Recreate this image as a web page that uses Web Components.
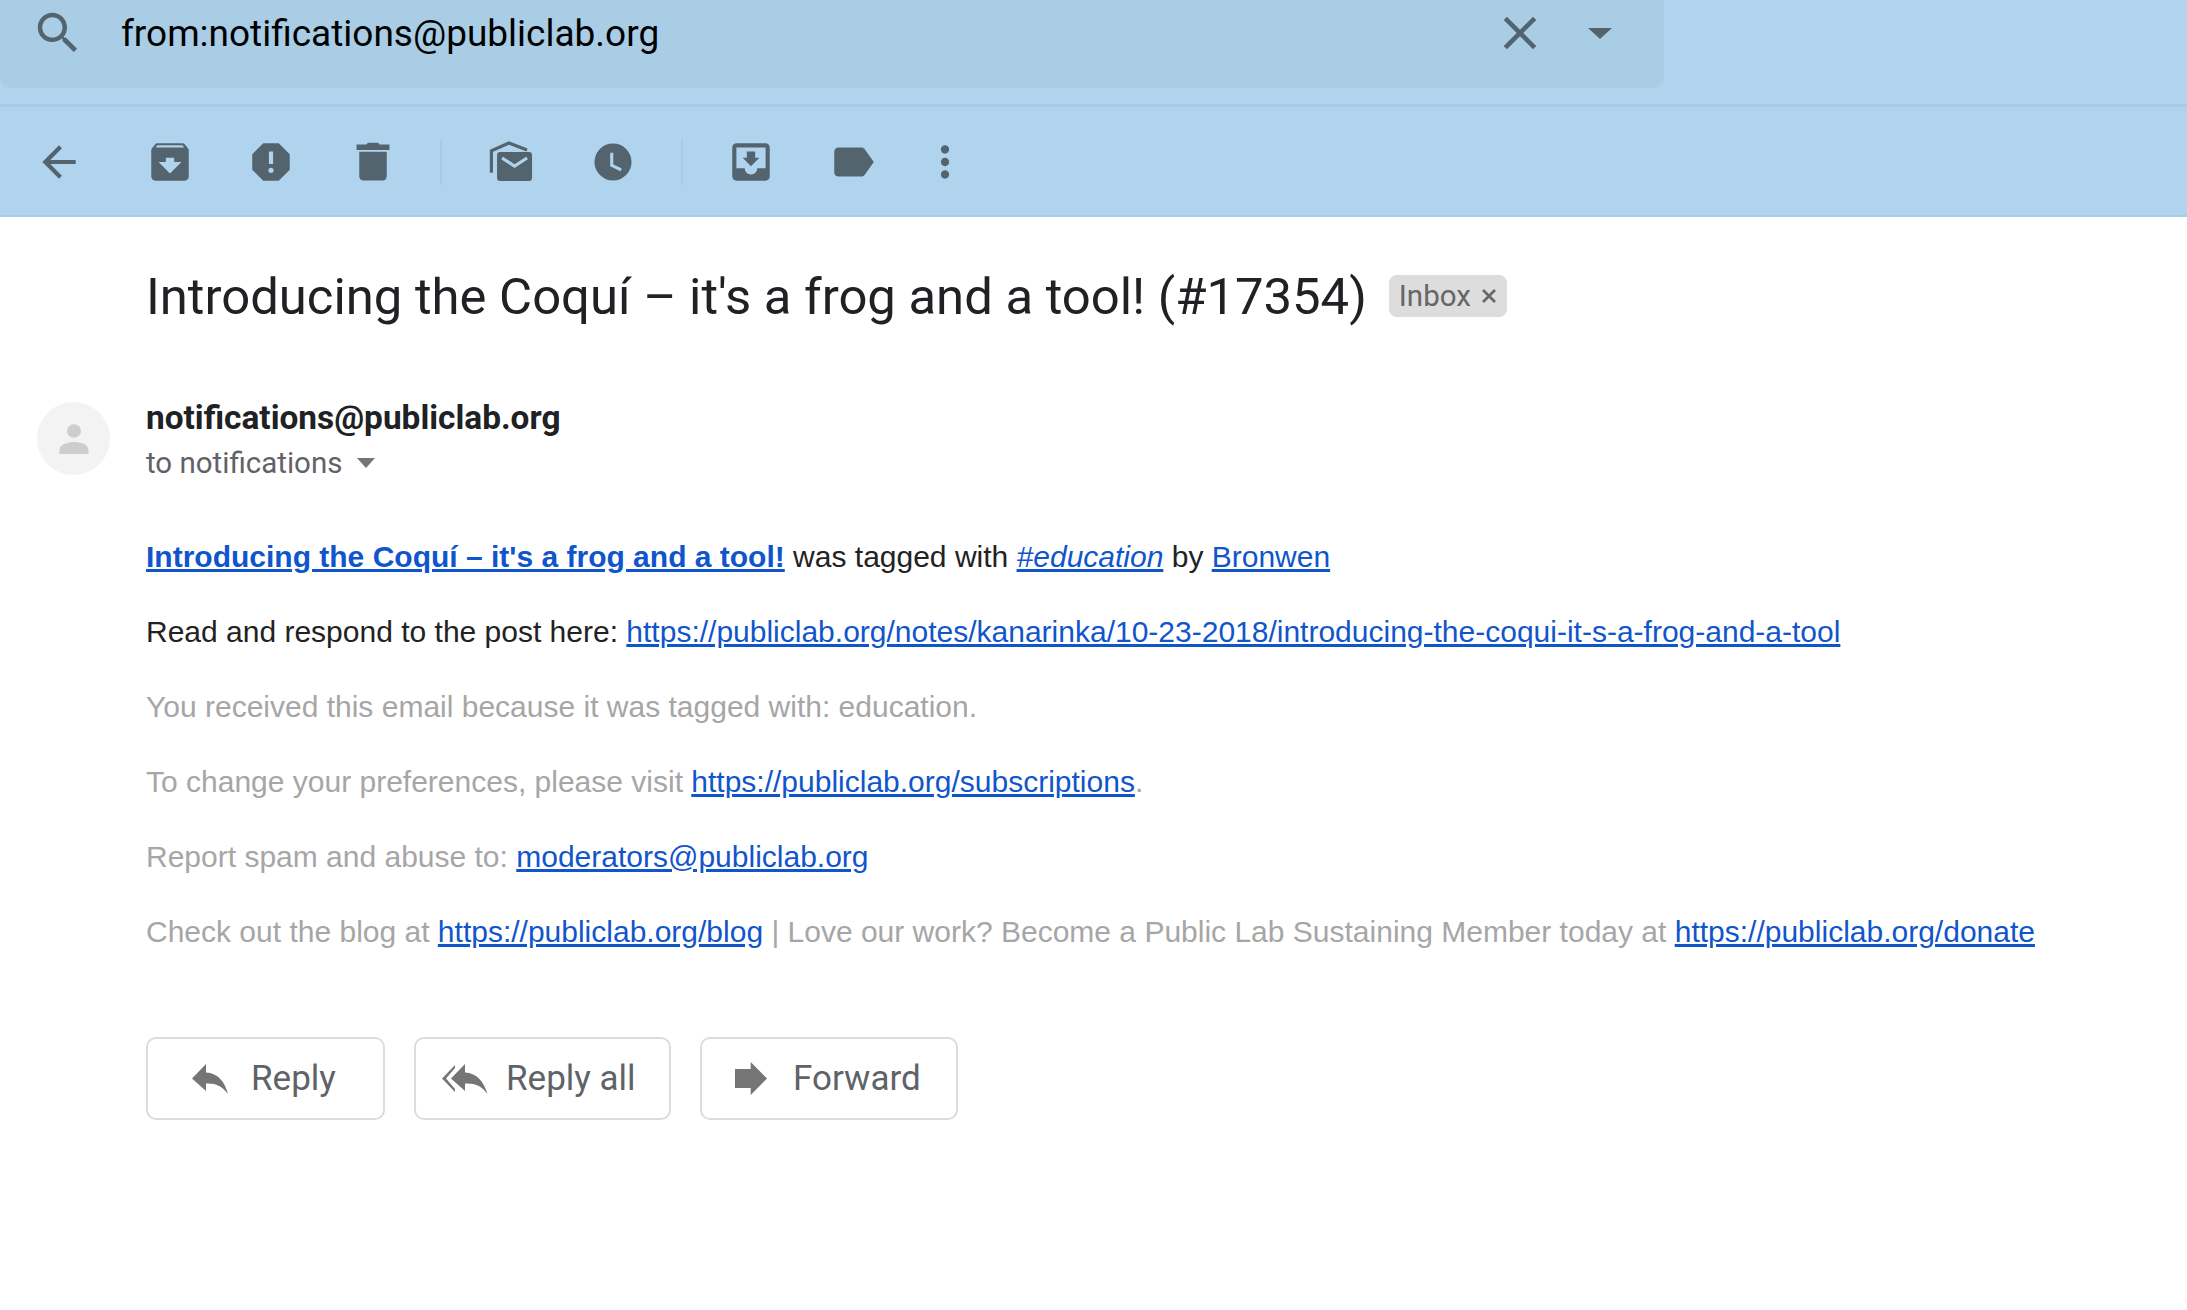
<!DOCTYPE html>
<html>
<head>
<meta charset="utf-8">
<title>Mail</title>
<style>
  html, body { margin: 0; padding: 0; background: #fff; }
  body { font-family: "Liberation Sans", Arial, sans-serif; width: 2187px; height: 1310px; overflow: hidden; }
</style>
</head>
<body>

<mail-header>
  <search-box query="from:notifications@publiclab.org"></search-box>
  <mail-toolbar></mail-toolbar>
</mail-header>

<mail-thread subject="Introducing the Coquí – it's a frog and a tool! (#17354)">
  <sender-row name="notifications@publiclab.org" recipient="to notifications"></sender-row>
  <mail-body>
    <p><a class="strong" href="#">Introducing the Coquí – it's a frog and a tool!</a> was tagged with <a href="#"><em>#education</em></a> by <a href="#">Bronwen</a></p>
    <p>Read and respond to the post here: <a href="#">https://publiclab.org/notes/kanarinka/10-23-2018/introducing-the-coqui-it-s-a-frog-and-a-tool</a></p>
    <p class="muted">You received this email because it was tagged with: education.</p>
    <p class="muted">To change your preferences, please visit <a href="#">https://publiclab.org/subscriptions</a>.</p>
    <p class="muted">Report spam and abuse to: <a href="#">moderators@publiclab.org</a></p>
    <p class="muted">Check out the blog at <a href="#">https://publiclab.org/blog</a> | Love our work? Become a Public Lab Sustaining Member today at <a href="#">https://publiclab.org/donate</a></p>
  </mail-body>
  <reply-bar>
    <reply-button icon="reply" style="width:239px;padding-left:44px;gap:23px">Reply</reply-button>
    <reply-button icon="replyAll" style="width:257px;padding-left:26px;gap:18px">Reply all</reply-button>
    <reply-button icon="forward" style="width:258px;padding-left:33px;gap:26px">Forward</reply-button>
  </reply-bar>
</mail-thread>

<script>
// all the toolbar icons, drawn in a 24 box except the few gmail specific ones
const ICONS = {
  back: '<path d="M20 11H7.83l5.59-5.59L12 4l-8 8 8 8 1.41-1.41L7.83 13H20v-2z"/>',
  archive: '<path d="M20.54 5.23l-1.39-1.68C18.88 3.21 18.47 3 18 3H6c-.47 0-.88.21-1.16.55L3.46 5.23C3.17 5.57 3 6.02 3 6.5V19c0 1.1.9 2 2 2h14c1.1 0 2-.9 2-2V6.5c0-.48-.17-.93-.46-1.27zM12 17.5L6.5 12H10v-2h4v2h3.5L12 17.5zM5.12 5l.81-1h12l.94 1H5.12z"/>',
  spam: '<path d="M15.73 3H8.27L3 8.27v7.46L8.27 21h7.46L21 15.73V8.27L15.73 3zM12 17.3c-.72 0-1.3-.58-1.3-1.3 0-.72.58-1.3 1.3-1.3.72 0 1.3.58 1.3 1.3 0 .72-.58 1.3-1.3 1.3zm1-4.3h-2V7h2v6z"/>',
  trash: '<path d="M4.1 3.6H8.8L9.6 2.8h4.8l.8.8h4.7v2.6H4.1zM5.4 7.1h13.2v11.7c0 1.2-.9 2.1-2 2.1H7.4c-1.1 0-2-.9-2-2.1z"/>',
  unread: '<path d="M2.6 17.2V6.6L11 2.9l8.7 3.3" fill="none" stroke="currentColor" stroke-width="1.5"/><rect x="5.3" y="7.2" width="16.8" height="13.9" rx="1.4"/><path d="M7.7 10.1l6 3.9 6-3.9" fill="none" stroke="#b0d4ee" stroke-width="1.5"/>',
  snooze: '<circle cx="12" cy="12" r="8.9"/><path d="M11.4 7.5v6.1l4.5 2.2" fill="none" stroke="#b0d4ee" stroke-width="1.5"/>',
  move: '<path d="M19 3H5c-1.1 0-2 .9-2 2v14c0 1.1.9 2 2 2h14c1.1 0 2-.9 2-2V5c0-1.1-.9-2-2-2zm0 12h-4c0 1.66-1.34 3-3 3s-3-1.34-3-3H5V5h14v10zm-3-5h-2V7h-4v3H8l4 4 4-4z"/>',
  label: '<path d="M17.63 5.84C17.27 5.33 16.67 5 16 5L5 5.01C3.9 5.01 3 5.9 3 7v10c0 1.1.9 1.99 2 1.99L16 19c.67 0 1.27-.33 1.63-.84L22 12l-4.37-6.16z"/>',
  more: '<path d="M12 8c1.1 0 2-.9 2-2s-.9-2-2-2-2 .9-2 2 .9 2 2 2zm0 2c-1.1 0-2 .9-2 2s.9 2 2 2 2-.9 2-2-.9-2-2-2zm0 6c-1.1 0-2 .9-2 2s.9 2 2 2 2-.9 2-2-.9-2-2-2z"/>',
  search: '<path d="M15.5 14h-.79l-.28-.27C15.41 12.59 16 11.11 16 9.5 16 5.91 13.09 3 9.5 3S3 5.91 3 9.5 5.91 16 9.5 16c1.61 0 3.09-.59 4.23-1.57l.27.28v.79l5 4.99L20.49 19l-4.99-5zm-6 0C7.01 14 5 11.99 5 9.5S7.01 5 9.5 5 14 7.01 14 9.5 11.99 14 9.5 14z"/>',
  close: '<path d="M19 6.41L17.59 5 12 10.59 6.41 5 5 6.41 10.59 12 5 17.59 6.41 19 12 13.41 17.59 19 19 17.59 13.41 12z"/>'
};

// reply buttons icons are in real pixels, [width, height, markup]
const REPLY_ICONS = {
  reply: [36, 30, '<path d="M0 14.5L14 0v8.5C26 9 33 18 36 30 30 22 24 19 14 19.5V27z"/>'],
  replyAll: [46, 30, '<path d="M13 1L0 14.5 13 28v-3L4 14.5 13 4z"/><path d="M9 14.5L23 0v8.5C35 9 42 18 45.5 30 39.5 22 34 19 23 19.5V27z"/>'],
  forward: [32, 33, '<path d="M0 7h15.7V0L32 16.5 15.7 33v-7H0z"/>']
};

class ToolIcon extends HTMLElement {
  constructor() {
    super();
    this.attachShadow({ mode: "open" });
    const name = this.getAttribute("name");
    const size = this.getAttribute("size") || 50;
    const width = this.getAttribute("box") || 102;
    this.shadowRoot.innerHTML = `
      <style>
        :host {
          display: flex;
          align-items: center;
          justify-content: center;
          flex: none;
          width: ${width}px;
          color: inherit;
        }
        svg { display: block; fill: currentColor; }
      </style>
      <svg width="${size}" height="${size}" viewBox="0 0 24 24">${ICONS[name]}</svg>
    `;
  }
}
customElements.define("tool-icon", ToolIcon);

class MailHeader extends HTMLElement {
  constructor() {
    super();
    this.attachShadow({ mode: "open" });
    this.shadowRoot.innerHTML = `
      <style>
        :host {
          display: block;
          background: #b0d4ee;
          height: 217px;
          box-sizing: border-box;
          border-bottom: 2px solid #a8cbe5;
        }
      </style>
      <slot></slot>
    `;
  }
}
customElements.define("mail-header", MailHeader);

class SearchBox extends HTMLElement {
  constructor() {
    super();
    this.attachShadow({ mode: "open" });
    this.shadowRoot.innerHTML = `
      <style>
        :host {
          display: flex;
          align-items: center;
          width: 1664px;
          height: 88px;
          box-sizing: border-box;
          padding: 0 0 22px 31px;
          background: #aacde6;
          border-radius: 0 0 10px 10px;
          color: #53646f;
        }
        .query {
          flex: 1;
          margin: 1px 0 0 36px;
          font: 37px Roboto, sans-serif;
          color: #000;
          white-space: nowrap;
        }
        .caret {
          width: 0;
          height: 0;
          margin: 0 52px 0 40px;
          border-left: 12px solid transparent;
          border-right: 12px solid transparent;
          border-top: 11px solid #53646f;
        }
      </style>
      <tool-icon name="search" size="54" box="54"></tool-icon>
      <span class="query"></span>
      <tool-icon name="close" size="56" box="56"></tool-icon>
      <span class="caret"></span>
    `;
    this.shadowRoot.querySelector(".query").textContent = this.getAttribute("query");
  }
}
customElements.define("search-box", SearchBox);

class MailToolbar extends HTMLElement {
  constructor() {
    super();
    this.attachShadow({ mode: "open" });
    this.shadowRoot.innerHTML = `
      <style>
        :host {
          display: flex;
          align-items: center;
          height: 106px;
          margin-top: 16px;
          padding: 2px 0 0 8px;
          border-top: 3px solid #a8cbe5;
          color: #53646f;
        }
        .sep {
          flex: none;
          width: 2px;
          height: 46px;
          background: #a8cbe5;
          margin: 0 18px 0 17px;
        }
        .sep.second { margin: 0 17px 0 17px; }
        .first { margin-right: 9px; }
      </style>
      <tool-icon class="first" name="back"></tool-icon>
      <tool-icon name="archive" box="101"></tool-icon>
      <tool-icon name="spam" box="102"></tool-icon>
      <tool-icon name="trash" box="101"></tool-icon>
      <span class="sep"></span>
      <tool-icon name="unread"></tool-icon>
      <tool-icon name="snooze"></tool-icon>
      <span class="sep second"></span>
      <tool-icon name="move"></tool-icon>
      <tool-icon name="label"></tool-icon>
      <tool-icon name="more" box="82"></tool-icon>
    `;
  }
}
customElements.define("mail-toolbar", MailToolbar);

class MailThread extends HTMLElement {
  constructor() {
    super();
    this.attachShadow({ mode: "open" });
    this.shadowRoot.innerHTML = `
      <style>
        :host { display: block; padding-top: 51px; }
        .subject {
          display: flex;
          align-items: center;
          gap: 22px;
          height: 56px;
          padding-left: 146px;
        }
        h1 {
          margin: 0;
          font: 400 50.8px Roboto, sans-serif;
          color: #202124;
          white-space: nowrap;
        }
        .chip {
          display: flex;
          align-items: center;
          gap: 10px;
          height: 42px;
          padding: 0 10px;
          border-radius: 8px;
          background: #dddddd;
          color: #666;
          font: 29.5px Roboto, sans-serif;
        }
        .chip svg { display: block; }
      </style>
      <div class="subject">
        <h1></h1>
        <span class="chip">Inbox
          <svg width="16" height="16" viewBox="0 0 16 16"><path d="M2 2l12 12M14 2L2 14" stroke="#666" stroke-width="2.6" fill="none"/></svg>
        </span>
      </div>
      <slot></slot>
    `;
    this.shadowRoot.querySelector("h1").textContent = this.getAttribute("subject");
  }
}
customElements.define("mail-thread", MailThread);

class SenderRow extends HTMLElement {
  constructor() {
    super();
    this.attachShadow({ mode: "open" });
    this.shadowRoot.innerHTML = `
      <style>
        :host {
          display: flex;
          gap: 36px;
          margin-top: 78px;
          padding-left: 37px;
        }
        .avatar {
          flex: none;
          width: 73px;
          height: 73px;
          border-radius: 50%;
          background: #f3f3f3;
          display: flex;
          align-items: center;
          justify-content: center;
        }
        .name {
          font: 700 33.4px Roboto, sans-serif;
          color: #202124;
          line-height: 40px;
          margin-top: -4px;
        }
        .to {
          display: flex;
          align-items: center;
          gap: 15px;
          font: 29.5px Roboto, sans-serif;
          color: #5f6368;
          line-height: 40px;
          margin-top: 5px;
        }
        .to i {
          width: 0;
          height: 0;
          border-left: 9px solid transparent;
          border-right: 9px solid transparent;
          border-top: 10px solid #757575;
        }
      </style>
      <span class="avatar">
        <svg width="30" height="30" viewBox="0 0 30 30" fill="#cdcdcd">
          <ellipse cx="15" cy="7" rx="7" ry="6.7"/>
          <path d="M.5 30v-4c0-6 9-8 14.5-8s14.5 2 14.5 8v4z"/>
        </svg>
      </span>
      <div>
        <div class="name"></div>
        <div class="to"><span class="recipient"></span><i></i></div>
      </div>
    `;
    this.shadowRoot.querySelector(".name").textContent = this.getAttribute("name");
    this.shadowRoot.querySelector(".recipient").textContent = this.getAttribute("recipient");
  }
}
customElements.define("sender-row", SenderRow);

class MailBody extends HTMLElement {
  constructor() {
    super();
    this.attachShadow({ mode: "open" });
    this.shadowRoot.innerHTML = `
      <style>
        :host {
          display: block;
          padding-left: 146px;
          margin-top: 56px;
          font: 30px/35px "Liberation Sans", Arial, sans-serif;
          color: #222;
        }
        ::slotted(p) {
          margin: 0 0 40px;
          white-space: nowrap;
        }
      </style>
      <slot></slot>
    `;
    // the paragraphs are light dom, their link colours are set here on the children
    this.querySelectorAll("a").forEach((a) => {
      a.style.color = "#1155cc";
      if (a.classList.contains("strong")) a.style.fontWeight = "700";
    });
    this.querySelectorAll("p.muted").forEach((p) => (p.style.color = "#a6a6a6"));
  }
}
customElements.define("mail-body", MailBody);

class ReplyBar extends HTMLElement {
  constructor() {
    super();
    this.attachShadow({ mode: "open" });
    this.shadowRoot.innerHTML = `
      <style>
        :host {
          display: flex;
          gap: 29px;
          padding-left: 146px;
          margin-top: 88px;
        }
      </style>
      <slot></slot>
    `;
  }
}
customElements.define("reply-bar", ReplyBar);

class ReplyButton extends HTMLElement {
  constructor() {
    super();
    this.attachShadow({ mode: "open" });
    const [w, h, markup] = REPLY_ICONS[this.getAttribute("icon")];
    this.shadowRoot.innerHTML = `
      <style>
        :host {
          display: flex;
          align-items: center;
          box-sizing: border-box;
          height: 83px;
          border: 2px solid #dadce0;
          border-radius: 10px;
          font: 400 35px Roboto, sans-serif;
          color: #5f6368;
          white-space: nowrap;
        }
        svg { display: block; flex: none; fill: #757575; }
      </style>
      <svg width="${w}" height="${h}" viewBox="0 0 ${w} ${h}">${markup}</svg>
      <slot></slot>
    `;
  }
}
customElements.define("reply-button", ReplyButton);
</script>
</body>
</html>
